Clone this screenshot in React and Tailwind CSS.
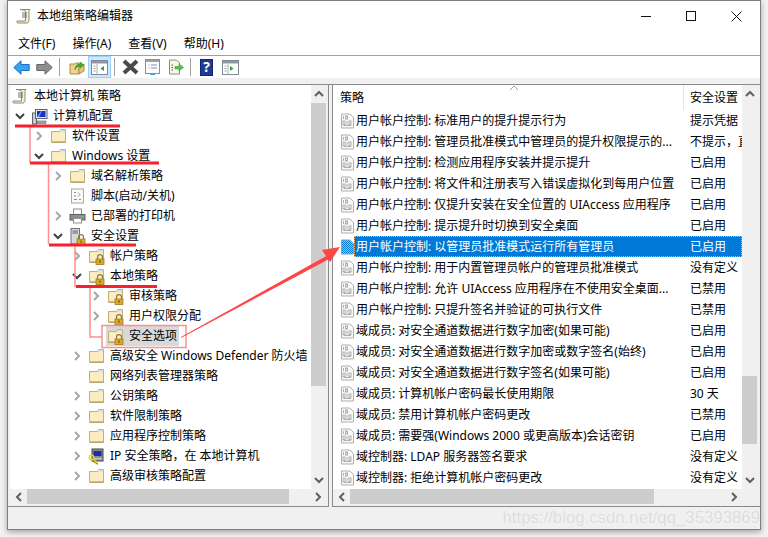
import React from "react";

const Chevron = ({ dir = "right", color = "#a6a6a6", size = 12 }) => {
  const pts = {
    right: "4,2 8,6 4,10",
    down: "2,4 6,8 10,4",
    up: "2,8 6,4 10,8",
    left: "8,2 4,6 8,10",
  }[dir];
  return (
    <svg width={size} height={size} viewBox="0 0 12 12" className="shrink-0">
      <polyline points={pts} fill="none" stroke={color} strokeWidth="2" />
    </svg>
  );
};

const Lock = () => (
  <g>
    <path d="M9.5 11V9.2a2.5 2.5 0 0 1 5 0V11" fill="none" stroke="#8f7d3e" strokeWidth="1.2" />
    <rect x="8" y="11" width="8" height="5.5" fill="#d9a928" stroke="#a07c1c" strokeWidth="0.8" />
    <rect x="11.3" y="12.6" width="1.4" height="2" fill="#6d5410" />
  </g>
);

const Folder = ({ lock }) => (
  <svg width="17" height="16" viewBox="0 0 17 16" className="shrink-0 overflow-visible">
    <path d="M1.5 3.5h8l1-2h5v12.9h-14z" fill="#f9e8b6" stroke="#c2b07c" strokeWidth="1" />
    <path d="M10.5 2h4.5v1.8h-4.8z" fill="#cfe3f2" />
    <path d="M2.5 4.8h12.5v8.8h-12.5z" fill="#fbedc4" />
    <path d="M2 14h13.5" stroke="#a8925a" strokeWidth="1" />
    {lock && <Lock />}
  </svg>
);

const Scroll = () => (
  <svg width="16" height="16" viewBox="0 0 16 16" className="shrink-0">
    <path d="M4 1.5h10c-1 1-1 2-1 3v8c0 1.5-1 2.5-2 2.5H2c-1 0-1.5-1-1-2h8.5V3.5C9.5 2.5 6 1.5 4 1.5z" fill="#f4edd3" stroke="#8f8a74" strokeWidth="1" />
    <path d="M6 5h5M6 7h5M6 9h5" stroke="#77736a" strokeWidth="1" />
  </svg>
);

const Computer = () => (
  <svg width="17" height="17" viewBox="0 0 17 17" className="shrink-0">
    <rect x="1.5" y="5" width="4" height="11" fill="#c9ccd4" stroke="#60646e" />
    <rect x="4.5" y="1.5" width="11.5" height="9" fill="#e5e8ee" stroke="#5f6472" />
    <rect x="6" y="3" width="8.5" height="6" fill="#1633c7" />
    <path d="M6 9l4-6h1l-3 6z" fill="#63a2ea" />
    <path d="M6 13h9v2.5H6z" fill="#a3a7b3" stroke="#60646e" strokeWidth="0.6" />
  </svg>
);

const ScriptIcon = () => (
  <svg width="15" height="16" viewBox="0 0 15 16" className="shrink-0">
    <rect x="1.5" y="1" width="12" height="14" fill="#fafafa" stroke="#a8a8a8" />
    <path d="M4 4.5h2M8 4.5l2 2-2 2M4 8h2M4 11.5h3M9 11.5h2" stroke="#8a8a8a" strokeWidth="1" fill="none" />
  </svg>
);

const Printer = () => (
  <svg width="17" height="16" viewBox="0 0 17 16" className="shrink-0">
    <rect x="4.5" y="1" width="8" height="6" fill="#fbfbfb" stroke="#8f8f8f" />
    <rect x="1" y="6.5" width="15" height="5.5" fill="#8a8d92" stroke="#5b5e63" />
    <rect x="4.5" y="10.5" width="8" height="4.5" fill="#fff" stroke="#8f8f8f" />
    <rect x="12.5" y="8" width="2" height="1" fill="#7ad06a" />
  </svg>
);

const SecurityIcon = () => (
  <svg width="17" height="17" viewBox="0 0 17 17" className="shrink-0 overflow-visible">
    <rect x="2" y="0.5" width="8.5" height="15.5" fill="#d7d9de" stroke="#6e7178" />
    <path d="M3.5 3h5.5M3.5 5h5.5" stroke="#565a62" strokeWidth="1" />
    <Lock />
  </svg>
);

const IpIcon = () => (
  <svg width="17" height="17" viewBox="0 0 17 17" className="shrink-0">
    <rect x="4" y="1" width="11" height="12" fill="#8a8d92" stroke="#45474b" />
    <rect x="5.5" y="3" width="8" height="5" fill="#1730a8" />
    <rect x="6" y="10" width="8" height="1.5" fill="#c4c6ca" />
    <circle cx="3.5" cy="9.5" r="2.2" fill="none" stroke="#e8d91e" strokeWidth="1.5" />
    <path d="M5 11l5 4.5M7 13.5l-1 1.5M9 15l-1 1" stroke="#e8d91e" strokeWidth="1.5" />
    <path d="M5 13l5 3.5" stroke="#333" strokeWidth="0.6" />
  </svg>
);

const PolicyIcon = ({ selected }) => {
  const c = selected ? "#6aa5de" : "#b0b0b0";
  return (
    <svg width="15" height="16" viewBox="0 0 15 16" className="shrink-0">
      <defs>
        <pattern id="dith" width="2" height="2" patternUnits="userSpaceOnUse">
          <rect width="2" height="2" fill="#0078d7" />
          <rect width="1" height="1" fill="#9cc5ea" />
          <rect x="1" y="1" width="1" height="1" fill="#9cc5ea" />
        </pattern>
      </defs>
      <path d="M1.5 1h8.5l3.5 3.5V15h-12z" fill={selected ? "url(#dith)" : "#f8f8f8"} stroke={c} />
      {!selected && (
        <g stroke={c} strokeWidth="1" fill="none">
          <path d="M3.5 3v3" />
          <rect x="5.5" y="3" width="2" height="3" />
          <rect x="3" y="8" width="2" height="3.5" />
          <path d="M7 8v3.5" />
          <rect x="9" y="8" width="2" height="3.5" />
          <path d="M11 12.5H3.5" />
        </g>
      )}
    </svg>
  );
};

const tree = [
  { d: -1, t: "本地计算机 策略", i: <Scroll /> },
  { d: 0, c: "down", t: "计算机配置", i: <Computer /> },
  { d: 1, c: "right", t: "软件设置", i: <Folder /> },
  { d: 1, c: "down", t: "Windows 设置", i: <Folder /> },
  { d: 2, c: "right", t: "域名解析策略", i: <Folder /> },
  { d: 2, t: "脚本(启动/关机)", i: <ScriptIcon /> },
  { d: 2, c: "right", t: "已部署的打印机", i: <Printer /> },
  { d: 2, c: "down", t: "安全设置", i: <SecurityIcon /> },
  { d: 3, c: "right", t: "帐户策略", i: <Folder lock /> },
  { d: 3, c: "down", t: "本地策略", i: <Folder lock /> },
  { d: 4, c: "right", t: "审核策略", i: <Folder lock /> },
  { d: 4, c: "right", t: "用户权限分配", i: <Folder lock /> },
  { d: 4, t: "安全选项", i: <Folder lock />, sel: true },
  { d: 3, c: "right", t: "高级安全 Windows Defender 防火墙", i: <Folder /> },
  { d: 3, t: "网络列表管理器策略", i: <Folder /> },
  { d: 3, c: "right", t: "公钥策略", i: <Folder /> },
  { d: 3, c: "right", t: "软件限制策略", i: <Folder /> },
  { d: 3, c: "right", t: "应用程序控制策略", i: <Folder /> },
  { d: 3, c: "right", t: "IP 安全策略，在 本地计算机", i: <IpIcon /> },
  { d: 3, c: "right", t: "高级审核策略配置", i: <Folder /> },
];

const U = "用户帐户控制: ";
const rows = [
  [U + "标准用户的提升提示行为", "提示凭据"],
  [U + "管理员批准模式中管理员的提升权限提示的...", "不提示，直接提升"],
  [U + "检测应用程序安装并提示提升", "已启用"],
  [U + "将文件和注册表写入错误虚拟化到每用户位置", "已启用"],
  [U + "仅提升安装在安全位置的 UIAccess 应用程序", "已启用"],
  [U + "提示提升时切换到安全桌面", "已启用"],
  [U + "以管理员批准模式运行所有管理员", "已启用", true],
  [U + "用于内置管理员帐户的管理员批准模式", "没有定义"],
  [U + "允许 UIAccess 应用程序在不使用安全桌面...", "已禁用"],
  [U + "只提升签名并验证的可执行文件", "已禁用"],
  ["域成员: 对安全通道数据进行数字加密(如果可能)", "已启用"],
  ["域成员: 对安全通道数据进行数字加密或数字签名(始终)", "已启用"],
  ["域成员: 对安全通道数据进行数字签名(如果可能)", "已启用"],
  ["域成员: 计算机帐户密码最长使用期限", "30 天"],
  ["域成员: 禁用计算机帐户密码更改", "已禁用"],
  ["域成员: 需要强(Windows 2000 或更高版本)会话密钥", "已启用"],
  ["域控制器: LDAP 服务器签名要求", "没有定义"],
  ["域控制器: 拒绝计算机帐户密码更改", "没有定义"],
];

const VScroll = ({ before, thumb }) => (
  <div className="w-[15px] shrink-0 bg-[#f0f0f0] flex flex-col items-center">
    <div className="h-[18px] flex items-center justify-center"><Chevron dir="up" color="#606060" /></div>
    <div className="w-full flex-1 flex flex-col">
      <div style={{ height: before }} />
      <div className="w-full bg-[#cdcdcd]" style={{ height: thumb }} />
    </div>
    <div className="h-[18px] flex items-center justify-center"><Chevron dir="down" color="#606060" /></div>
  </div>
);

const HScroll = ({ thumb, corner }) => (
  <div className="h-[15px] shrink-0 bg-[#f0f0f0] flex items-center">
    <div className="w-[17px] flex justify-center shrink-0"><Chevron dir="left" color="#606060" /></div>
    <div className="h-full bg-[#cdcdcd]" style={{ width: thumb }} />
    <div className="flex-1" />
    <div className="w-[17px] flex justify-center shrink-0"><Chevron dir="right" color="#606060" /></div>
    {corner && <div className="w-[15px] shrink-0" />}
  </div>
);

const Sep = () => <div className="w-px h-[18px] bg-[#a0a0a0] shrink-0" />;

const BackArrow = ({ fill, stroke }) => (
  <svg width="17" height="15" viewBox="0 0 17 15">
    <path d="M0.8 7.5L8 0.8v3.7h8.2v6H8v3.7z" fill={fill} stroke={stroke} strokeWidth="1" strokeLinejoin="round" />
  </svg>
);

const PaneIcon = ({ green, right }) => (
  <svg width="17" height="15" viewBox="0 0 17 15">
    <rect x="0.5" y="0.5" width="16" height="14" fill="#fff" stroke="#7f8a94" />
    <rect x="1" y="1" width="15" height="2.5" fill="#8c98a3" />
    <path d="M6 3.5v11" stroke="#a8b0b8" />
    <path d="M2.5 6h2M2.5 8.5h2M2.5 11h2" stroke="#8aa0b0" />
    {right ? <path d="M8 6l3.5 2.5L8 11z" fill={green} /> : <path d="M13 6l-3.5 2.5L13 11z" fill={green} />}
  </svg>
);

function Toolbar() {
  return (
    <div className="h-[22px] flex items-center bg-white pl-[5px] shrink-0">
      <div className="w-[17px] flex shrink-0"><BackArrow fill="#3aa3ee" stroke="#1c6fc4" /></div>
      <div className="w-[17px] ml-[6px] flex shrink-0 -scale-x-100"><BackArrow fill="#8e8e8e" stroke="#666" /></div>
      <div className="ml-[6px]"><Sep /></div>
      <svg width="17" height="16" viewBox="0 0 17 16" className="ml-[9px] shrink-0">
        <path d="M1 5h5l1-1h3v11H1z" fill="#f0d48a" stroke="#a98f50" />
        <path d="M10 15l5-3V5l-5 3z" fill="#e5c473" stroke="#a98f50" />
        <path d="M6 11c0-4 2-6 5-6V3l4 3-4 3V7c-2 0-4 1-5 4z" fill="#3fae3a" stroke="#2a8026" strokeWidth="0.5" />
      </svg>
      <div className="ml-[2px] w-[23px] h-[22px] bg-[#cce8ff] border border-[#99d1ff] flex items-center justify-center shrink-0"><PaneIcon green="#2f9e44" /></div>
      <div className="ml-[3px]"><Sep /></div>
      <svg width="17" height="16" viewBox="0 0 17 16" className="ml-[7px] shrink-0">
        <path d="M2 2l13 12M15 2L2 14" stroke="#4a4a4a" strokeWidth="4" />
      </svg>
      <svg width="15" height="16" viewBox="0 0 15 16" className="ml-[6px] shrink-0">
        <rect x="0.5" y="0.5" width="14" height="14" fill="#fdfdfd" stroke="#8a8f96" />
        <rect x="1" y="1" width="13" height="2" fill="#9aa2aa" />
        <path d="M3.5 6h1M6 6h6M3.5 9h1M6 9h6" stroke="#7b94ad" />
        <rect x="5" y="14" width="5" height="2" fill="#4aa5e0" />
      </svg>
      <svg width="16" height="16" viewBox="0 0 16 16" className="ml-[8px] shrink-0">
        <path d="M1.5 1h7l3 3v11h-10z" fill="#fbf7e6" stroke="#908b74" />
        <path d="M3.5 6h1.5M3.5 8.5h1.5M3.5 11h1.5" stroke="#555" />
        <path d="M7 7.5h4V5l4.5 3.5-4.5 3.5V10H7z" fill="#52c04a" stroke="#2f8f2b" strokeWidth="0.5" />
      </svg>
      <div className="ml-[6px]"><Sep /></div>
      <div className="ml-[9px] w-[13px] h-[17px] flex items-center justify-center bg-[#1f3a93] border border-[#14266b] text-white text-[14px] font-bold leading-none shrink-0">?</div>
      <div className="ml-[9px] flex shrink-0"><PaneIcon green="#2f9e44" right /></div>
    </div>
  );
}

function Annotations() {
  return (
    <svg className="absolute left-0 top-0 pointer-events-none" width="768" height="537" viewBox="0 0 768 537">
      <g stroke="#ff8f8f" strokeWidth="1.5" fill="none">
        <path d="M30 127V163" />
        <path d="M48.5 163V244" />
        <path d="M75 245V287" />
        <path d="M90 287V337H102" />
        <rect x="102" y="325.5" width="84" height="22" />
      </g>
      <g stroke="#f5222d" strokeWidth="3" fill="none">
        <path d="M15 126H120" />
        <path d="M30 163H159" />
        <path d="M49 245H136" />
        <path d="M76 286.5H157" />
      </g>
      <path d="M181 337L329 254.5L331 258L181 338Z" fill="#ff4646" />
      <path d="M340 247L322 250L330 262Z" fill="#ff4646" />
    </svg>
  );
}

export default function App() {
  return (
    <div className="relative w-[768px] h-[537px] overflow-hidden bg-[#f3f3f3] text-[12px] leading-[20px] text-black [font-family:'Noto_Sans','Noto_Sans_CJK_SC',sans-serif]">
      <div className="ml-[7px] w-[754px] h-[530px] bg-[#f0f0f0] border border-[#7f7f7f] flex flex-col shadow-[0_2px_6px_rgba(0,0,0,0.35)]">
        {/* title */}
        <div className="h-[31px] pb-[1px] bg-white flex items-center pl-[8px] shrink-0">
          <Scroll />
          <span className="ml-[5px]">本地组策略编辑器</span>
          <div className="flex-1" />
          <div className="w-[45px] flex justify-center">
            <div className="w-[10px] h-px bg-[#111]" />
          </div>
          <div className="w-[46px] flex justify-center">
            <div className="w-[10px] h-[10px] border border-[#111]" />
          </div>
          <div className="w-[46px] pr-[1px] flex justify-center">
            <svg width="11" height="11" viewBox="0 0 11 11"><path d="M0.5 0.5l10 10M10.5 0.5l-10 10" stroke="#111" /></svg>
          </div>
        </div>
        {/* menu */}
        <div className="h-[23px] bg-white flex items-center pl-[10px] gap-[17px] shrink-0 border-b border-[#a0a0a0] box-content">
          <span>文件(F)</span>
          <span>操作(A)</span>
          <span>查看(V)</span>
          <span>帮助(H)</span>
        </div>
        <Toolbar />
        <div className="h-[6px] bg-[#f0f0f0] shrink-0" />
        {/* panes */}
        <div className="flex-1 min-h-0 flex gap-[3px] border-t border-[#8a8a8a]">
          {/* left pane */}
          <div className="w-[321px] shrink-0 border-r border-b border-[#8a8a8a] bg-[#f0f0f0] flex flex-col pl-[2px] pr-[2px]">
            <div className="flex-1 min-h-0 flex">
              <div className="flex-1 min-w-0 bg-white overflow-hidden pt-[1px]">
                {tree.map((n, i) => (
                  <div key={i} className="h-[20px] flex items-center" style={{ paddingLeft: n.d < 0 ? 2 : 4 + n.d * 19 }}>
                    {n.d >= 0 && (
                      <span className="w-[12px] flex justify-center shrink-0 mr-[5px]">
                        {n.c ? <Chevron dir={n.c} color={n.c === "down" ? "#404040" : "#a6a6a6"} /> : null}
                      </span>
                    )}
                    {n.sel ? (
                      <span className="h-[20px] -ml-[1px] pl-[1px] pr-[2px] flex items-center bg-[#d9d9d9] whitespace-nowrap">
                        <span className="w-[16px] flex justify-center shrink-0">{n.i}</span>
                        <span className="ml-[6px]">{n.t}</span>
                      </span>
                    ) : (
                      <>
                        <span className="w-[16px] flex justify-center shrink-0">{n.i}</span>
                        <span className="ml-[6px] whitespace-nowrap">{n.t}</span>
                      </>
                    )}
                  </div>
                ))}
              </div>
              <VScroll before={0} thumb={283} />
            </div>
            <HScroll thumb={262} />
            <div className="h-[2px] shrink-0" />
          </div>
          {/* right pane */}
          <div className="flex-1 min-w-0 border-l border-b border-[#8a8a8a] bg-[#f0f0f0] flex flex-col pr-[3px]">
            <div className="flex-1 min-h-0 flex">
              <div className="flex-1 min-w-0 bg-white overflow-hidden flex flex-col relative">
                <div className="h-[25px] flex shrink-0">
                  <div className="w-[350px] shrink-0 pl-[7px] flex items-center relative">
                    策略
                    <span className="absolute left-[176px] top-0 flex"><svg width="10" height="6" viewBox="0 0 10 6"><polyline points="1,5 5,1 9,5" fill="none" stroke="#9a9a9a" /></svg></span>
                  </div>
                  <div className="flex-1 border-l border-[#e5e5e5] pl-[6px] flex items-center whitespace-nowrap">安全设置</div>
                </div>
                {rows.map((r, i) => (
                  <div key={i} className="h-[21px] shrink-0 flex items-center pl-[7px]">
                    <PolicyIcon selected={r[2]} />
                    <div className={`flex-1 min-w-0 h-[21px] flex items-center -ml-[1px] ${r[2] ? "bg-[#0078d7] text-white outline-1 -outline-offset-1 outline-dotted outline-[#f5b070]" : ""}`}>
                      <span className="w-[336px] shrink-0 pl-[2px] whitespace-nowrap">{r[0]}</span>
                      <span className="flex-1 min-w-0 whitespace-nowrap overflow-hidden">{r[1]}</span>
                    </div>
                  </div>
                ))}
              </div>
              <VScroll before={273} thumb={68} />
            </div>
            <HScroll thumb={304} corner />
            <div className="h-[2px] shrink-0" />
          </div>
        </div>
        {/* status */}
        <div className="h-[22px] shrink-0 bg-[#f0f0f0]" />
      </div>
      <Annotations />
      <div className="absolute right-[8px] top-[509px] h-[18px] flex items-center text-[#dcdcdc] text-[16.8px] [font-family:'Liberation_Sans',sans-serif] whitespace-nowrap [text-shadow:0_0_1px_#fff]">
        https://blog.csdn.net/qq_35393869
      </div>
    </div>
  );
}
